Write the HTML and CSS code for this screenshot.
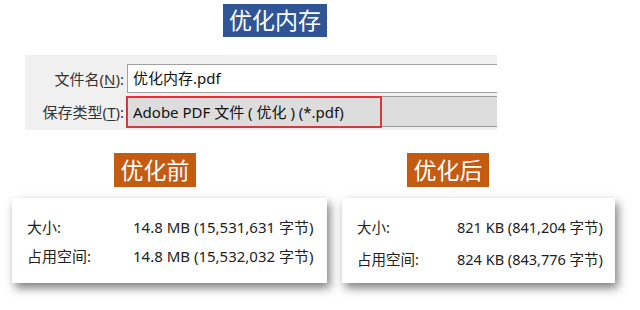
FILE: index.html
```html
<!DOCTYPE html>
<html lang="zh-CN">
<head>
    <meta charset="UTF-8">
    <title>优化内存</title>
    <link rel="stylesheet" href="styles.css">
</head>
<body>
    <div class="page">
        <div class="title-row">
            <span class="tag tag-blue">优化内存</span>
        </div>

        <div class="dialog">
            <div class="dialog-row">
                <label class="dialog-label">文件名(<u>N</u>):</label>
                <div class="field field-input">优化内存.pdf</div>
            </div>
            <div class="dialog-row">
                <label class="dialog-label">保存类型(<u>T</u>):</label>
                <div class="field field-select">
                    <span class="highlight">Adobe PDF 文件 ( 优化 ) (*.pdf)</span>
                </div>
            </div>
        </div>

        <div class="compare">
            <div class="compare-col col-before">
                <span class="tag tag-orange">优化前</span>
                <div class="card">
                    <div class="prop">
                        <span class="prop-label">大小:</span>
                        <span class="prop-value">14.8 MB (15,531,631 字节)</span>
                    </div>
                    <div class="prop">
                        <span class="prop-label">占用空间:</span>
                        <span class="prop-value">14.8 MB (15,532,032 字节)</span>
                    </div>
                </div>
            </div>
            <div class="compare-col col-after">
                <span class="tag tag-orange">优化后</span>
                <div class="card">
                    <div class="prop">
                        <span class="prop-label">大小:</span>
                        <span class="prop-value">821 KB (841,204 字节)</span>
                    </div>
                    <div class="prop">
                        <span class="prop-label">占用空间:</span>
                        <span class="prop-value">824 KB (843,776 字节)</span>
                    </div>
                </div>
            </div>
        </div>
    </div>
</body>
</html>
```

FILE: styles.css
```css
body {
    margin: 0;
    background: white;
    font-family: "Noto Sans", "Noto Sans CJK SC", sans-serif;
    color: #222;
}
.page {
    width: 640px;
    height: 310px;
    overflow: hidden;
}
.title-row {
    padding: 4px 0 0 223px;
    height: 33px;
}
.tag {
    display: inline-block;
    color: white;
    font-size: 23px;
    line-height: 33px;
    height: 33px;
    text-align: center;
}
.tag-blue {
    background-color: #2f5597;
    width: 104px;
}
.tag-orange {
    background-color: #c55a11;
    width: 82px;
    height: 34px;
    line-height: 34px;
}
.dialog {
    margin: 18px 0 0 25px;
    width: 472px;
    height: 75px;
    box-sizing: border-box;
    padding-top: 9px;
    background-color: #f0f0f0;
}
.dialog-row {
    display: flex;
    align-items: center;
    margin-bottom: 3px;
}
.dialog-label {
    width: 99px;
    padding-right: 3px;
    text-align: right;
    font-size: 15px;
    color: #333;
    white-space: nowrap;
}
.dialog-label u {
    text-underline-offset: 2px;
}
.field {
    flex: 1;
    box-sizing: border-box;
    font-size: 15px;
    color: #111;
}
.field-input {
    height: 29px;
    line-height: 27px;
    padding-left: 5px;
    background: white;
    border: 1px solid #a0a0a0;
    border-right: none;
}
.field-select {
    height: 31px;
    background-color: #dddddd;
    border-top: 1px solid #9a9a9a;
    border-bottom: 1px solid #9a9a9a;
}
.highlight {
    display: block;
    width: 256px;
    height: 32px;
    margin: -1px 0 0 -1px;
    box-sizing: border-box;
    border: 2px solid #e3333a;
    padding-left: 5px;
    line-height: 28px;
    white-space: nowrap;
}
.compare {
    display: flex;
    margin-top: 23px;
}
.compare-col {
    display: flex;
    flex-direction: column;
}
.col-before {
    width: 330px;
    padding-left: 12px;
}
.col-before .tag {
    margin-left: 102px;
}
.col-after .tag {
    margin-left: 65px;
}
.card {
    margin-top: 11px;
    background: white;
    box-shadow: 3px 5px 9px rgba(0, 0, 0, 0.5);
    padding: 19px 0 0 15px;
    height: 85px;
    box-sizing: border-box;
}
.col-before .card {
    width: 315px;
}
.col-after .card {
    width: 273px;
}
.prop {
    display: flex;
    font-size: 15px;
    line-height: 20px;
    margin-bottom: 9px;
    color: #222;
    white-space: nowrap;
}
.col-after .prop {
    font-size: 14.5px;
    margin-bottom: 12px;
}
.col-before .prop-label {
    width: 106px;
}
.col-after .prop-label {
    width: 100px;
}
```
